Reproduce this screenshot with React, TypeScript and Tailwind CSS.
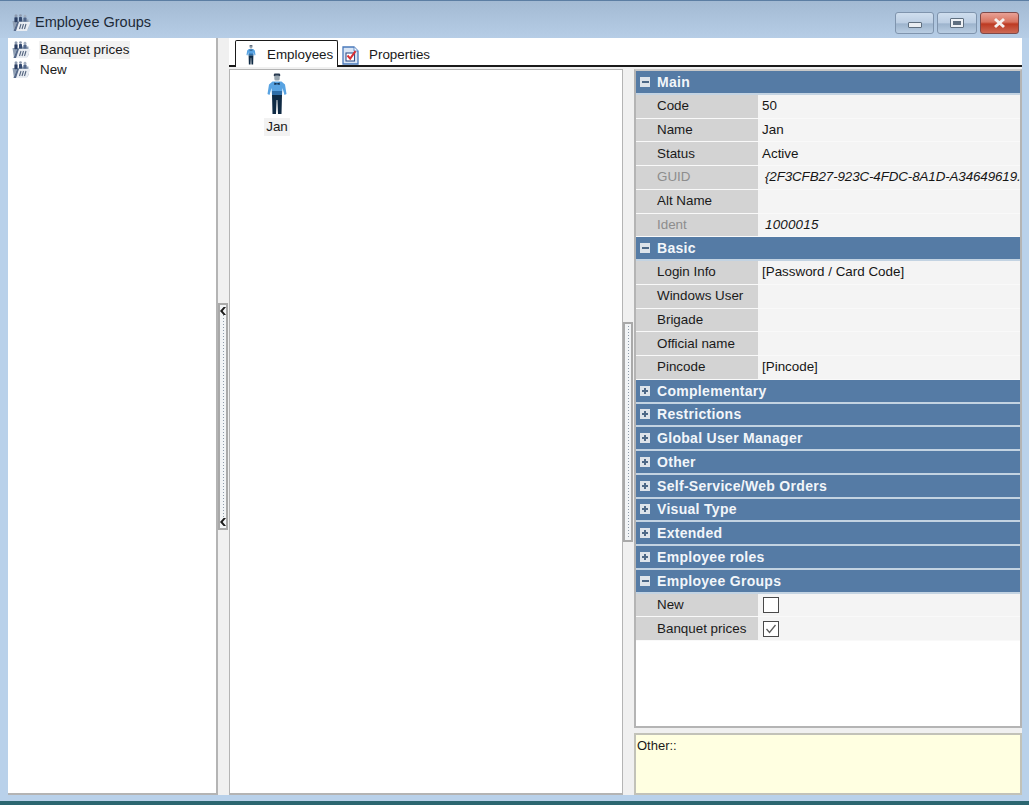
import React from "react";

const FONT = "font-['Liberation_Sans',Arial,sans-serif]";

function GroupIcon() {
  return (
    <svg width="20" height="18" viewBox="0 0 20 18" className="shrink-0">
      <path d="M1.5 7h6l1-1.5h9V14l-2 3H3z" fill="#8f9fb4" />
      <circle cx="5" cy="1.8" r="1.5" fill="#8d9aae" />
      <rect x="3.4" y="3.2" width="3.2" height="5" rx="0.6" fill="#2c3f63" />
      <circle cx="9.5" cy="1.6" r="1.4" fill="#8d9aae" />
      <rect x="8" y="3" width="3" height="4.5" rx="0.6" fill="#344a70" />
      <circle cx="14" cy="2.2" r="1.4" fill="#a2aebf" />
      <rect x="12.5" y="3.6" width="3" height="4" rx="0.6" fill="#52678a" />
      <path d="M6 8h13.5l-3.5 9H2.5z" fill="#e9edf3" />
      <path d="M6 8h2L5 17H2.5z" fill="#55698a" />
      <path d="M10 10l-1.5 5M12.5 10L11 15M15 10l-1.5 5" stroke="#54657f" strokeWidth="1.1" />
    </svg>
  );
}

function PersonIcon({ w = 20, h = 42 }: { w?: number; h?: number }) {
  return (
    <svg width={w} height={h} viewBox="0 0 20 42" className="shrink-0">
      <rect x="6.8" y="0.5" width="6.4" height="3" rx="1.2" fill="#2b3c52" />
      <rect x="7.3" y="2.5" width="5.4" height="5" rx="1.5" fill="#98a6b0" />
      <path d="M5.5 8.5 L14.5 8.5 L18 11.5 L19.5 21 L17.5 22 L15.5 15 L15 22 L5 22 L4.5 15 L2.5 22 L0.5 21 L2 11.5 Z" fill="#58a3e2" />
      <path d="M7.3 9.5 L10 10.5 L12.7 9.5 L12.7 12 L10 11.2 L7.3 12 Z" fill="#12304f" />
      <path d="M5 18 L15 18 L15 22 L5 22 Z" fill="#2f6ea8" />
      <path d="M5 22 L15 22 L14.5 41 L11 41 L10.4 27 L9.6 27 L9 41 L5.5 41 Z" fill="#0f2a44" />
    </svg>
  );
}

function PropertiesIcon() {
  return (
    <svg width="17" height="19" viewBox="0 0 17 19" className="shrink-0">
      <path d="M1 1h11l4 4v13H1z" fill="#d9e5f5" stroke="#4a79bb" strokeWidth="1.3" />
      <path d="M12 1v4h4" fill="#f4f7fb" stroke="#4a79bb" strokeWidth="0.8" />
      <rect x="4" y="7" width="8.5" height="8" fill="#fff" stroke="#34528a" strokeWidth="1.1" />
      <path d="M5.5 9.5l2.7 3.2 5.3-7.5" fill="none" stroke="#d92f35" strokeWidth="2" />
    </svg>
  );
}

function Minus() {
  return (
    <span className="flex h-[10px] w-[10px] shrink-0 items-center justify-center bg-[#dde3ea]">
      <span className="h-[2px] w-[7px] bg-[#4d6887]" />
    </span>
  );
}

function Plus() {
  return (
    <span className="relative flex h-[10px] w-[10px] shrink-0 items-center justify-center bg-[#dde3ea]">
      <span className="h-[2px] w-[6px] bg-[#4d6887]" />
      <span className="absolute left-[4px] top-[2px] h-[6px] w-[2px] bg-[#4d6887]" />
    </span>
  );
}

function Section({ label, open }: { label: string; open?: boolean }) {
  return (
    <div className="flex h-[23.76px] items-center gap-[7px] border-b-[2px] border-b-[#c3d3e2] bg-[#557ba5] pl-[4px]">
      {open ? <Minus /> : <Plus />}
      <span className="text-[14px] font-bold leading-none tracking-[0.3px] text-[#f2f6fa]">{label}</span>
    </div>
  );
}

function Row({
  label,
  children,
  dim,
}: {
  label: string;
  children?: React.ReactNode;
  dim?: boolean;
}) {
  return (
    <div className="flex h-[23.76px] items-stretch border-b border-b-[#f9f9f9] bg-[#f4f4f4]">
      <div
        className={`flex w-[122px] shrink-0 items-center bg-[#d3d3d3] pl-[21px] text-[13.4px] ${dim ? "text-[#8d8d8d]" : "text-[#1a1a1a]"}`}
      >
        {label}
      </div>
      <div className="flex min-w-0 flex-1 items-center overflow-hidden whitespace-nowrap pl-[4px] text-[13.4px] text-[#161616]">
        {children}
      </div>
    </div>
  );
}

function Check({ checked }: { checked?: boolean }) {
  return (
    <span className="ml-[1px] flex h-[16px] w-[16px] items-center justify-center border border-[#4a4a4a] bg-white">
      {checked && (
        <svg width="12" height="12" viewBox="0 0 12 12">
          <path d="M1.5 6l3 3.5L10.5 2" fill="none" stroke="#5c5c5c" strokeWidth="1.3" />
        </svg>
      )}
    </span>
  );
}

function Splitter({ top, height, arrows }: { top: number; height: number; arrows: boolean }) {
  return (
    <div className="relative w-[11px] shrink-0 bg-[#f0f0f0]">
      <div
        className="absolute left-0 flex w-[10px] flex-col items-center justify-between border-2 border-[#a9a9a9] bg-[#f2f4f6] py-[2px]"
        style={{ top, height }}
      >
        {arrows && <span className="block h-[8px] w-[6px] bg-[#1b1b1b] [clip-path:polygon(100%_0,45%_50%,100%_100%,60%_100%,0_50%,60%_0)]" />}
        <span className="w-px flex-1 [background-image:linear-gradient(#8d9aa8_50%,transparent_50%)] [background-size:1px_3px]" />
        {arrows && <span className="block h-[8px] w-[6px] bg-[#1b1b1b] [clip-path:polygon(100%_0,45%_50%,100%_100%,60%_100%,0_50%,60%_0)]" />}
      </div>
    </div>
  );
}

function WinButton({ kind }: { kind: "min" | "max" | "close" }) {
  if (kind === "close") {
    return (
      <div className="flex h-[22px] w-[39px] items-center justify-center rounded-[3px] border border-[#7d4a4a] bg-[linear-gradient(#e8a196_0%,#d7735f_45%,#bd3a22_55%,#cd6a55_100%)]">
        <svg width="15" height="12" viewBox="0 0 15 12">
          <path d="M3 2l9 8M12 2l-9 8" stroke="#f5f0ee" strokeWidth="3" />
        </svg>
      </div>
    );
  }
  return (
    <div className={`flex h-[22px] items-center justify-center rounded-[3px] border border-[#7f94ad] bg-[linear-gradient(#cfdeee_0%,#bccee3_48%,#9db4cd_55%,#b9cde2_100%)] ${kind === "min" ? "w-[39px]" : "w-[40px]"}`}>
      {kind === "min" ? (
        <span className="mt-[5px] h-[6px] w-[14px] rounded-[1px] border border-[#5f6f80] bg-[#e9edf2]" />
      ) : (
        <span className="flex h-[10px] w-[14px] items-center justify-center rounded-[1px] border border-[#5f6f80] bg-[#eef1f5]">
          <span className="h-[4px] w-[8px] bg-[#5f6f80]" />
        </span>
      )}
    </div>
  );
}

export default function App() {
  return (
    <div className={`${FONT} flex h-[805px] w-[1029px] flex-col overflow-hidden bg-[#b9d1ea] text-[14px]`}>
      {/* title bar */}
      <div className="flex h-[38px] shrink-0 items-center justify-between border-t border-t-[#5c7ea3] bg-[linear-gradient(#a3bad3,#b6cde6)] pl-[11px] pr-[10px] pt-[7px]">
        <div className="flex items-center gap-[4px]">
          <GroupIcon />
          <span className="text-[14.5px] text-[#1d2a38]">Employee Groups</span>
        </div>
        <div className="-mt-[1px] flex gap-[3px]">
          <WinButton kind="min" />
          <WinButton kind="max" />
          <WinButton kind="close" />
        </div>
      </div>

      {/* body */}
      <div className="flex min-h-0 flex-1 pl-[8px] pr-[7px]">
        {/* tree */}
        <div className="w-[210px] shrink-0 border-b-2 border-r-2 border-[#b4b4b4] bg-white pt-[2px]">
          <div className="flex h-[20px] items-center pl-[3px]">
            <GroupIcon />
            <span className="ml-[8px] bg-[#f2f2f2] px-[1px] text-[13.4px] leading-[18px] text-[#1a1a1a]">Banquet prices</span>
          </div>
          <div className="flex h-[20px] items-center pl-[3px]">
            <GroupIcon />
            <span className="ml-[8px] px-[1px] text-[13.4px] leading-[18px] text-[#1a1a1a]">New</span>
          </div>
        </div>

        <Splitter top={265} height={227} arrows />

        {/* right side */}
        <div className="flex min-w-0 flex-1 flex-col">
          {/* tabs */}
          <div className="relative flex h-[29px] shrink-0 items-end border-b-2 border-b-[#1a1a1a] bg-white">
            <div className="relative z-10 -mb-[2px] ml-[6px] flex h-[27px] w-[103px] items-center rounded-t-[2px] border border-b-0 border-[#1a1a1a] bg-white pl-[9px] pt-[2px]">
              <PersonIcon w={12} h={20} />
              <span className="ml-[10px] text-[13.4px] text-[#1a1a1a]">Employees</span>
            </div>
            <div className="flex h-[27px] items-center pl-[4px] pt-[7px]">
              <PropertiesIcon />
              <span className="ml-[10px] text-[13.4px] text-[#1a1a1a]">Properties</span>
            </div>
          </div>

          <div className="flex min-h-0 flex-1 bg-[#f0f0f0] pt-[2px]">
            {/* employees */}
            <div className="w-[394px] shrink-0 border-x border-b-2 border-t border-[#b4b4b4] bg-white">
              <div className="ml-[32px] mt-[3px] flex w-[30px] flex-col items-center">
                <PersonIcon />
                <span className="mt-[3px] bg-[#f2f2f2] px-[2px] text-[13.4px] leading-[18px] text-[#1a1a1a]">Jan</span>
              </div>
            </div>

            <Splitter top={253} height={220} arrows={false} />

            {/* props */}
            <div className="flex min-w-0 flex-1 flex-col gap-[5px]">
              <div className="flex h-[659px] shrink-0 flex-col border-2 border-[#b4b4b4] border-t-[#c8c8c8] bg-white">
                <Section label="Main" open />
                <Row label="Code">50</Row>
                <Row label="Name">Jan</Row>
                <Row label="Status">Active</Row>
                <Row label="GUID" dim>
                  <span className="pl-[3px] italic tracking-[-0.12px]">{"{2F3CFB27-923C-4FDC-8A1D-A34649619."}</span>
                </Row>
                <Row label="Alt Name" />
                <Row label="Ident" dim>
                  <span className="pl-[3px] italic tracking-[0.2px]">1000015</span>
                </Row>
                <Section label="Basic" open />
                <Row label="Login Info">[Password / Card Code]</Row>
                <Row label="Windows User" />
                <Row label="Brigade" />
                <Row label="Official name" />
                <Row label="Pincode">[Pincode]</Row>
                <Section label="Complementary" />
                <Section label="Restrictions" />
                <Section label="Global User Manager" />
                <Section label="Other" />
                <Section label="Self-Service/Web Orders" />
                <Section label="Visual Type" />
                <Section label="Extended" />
                <Section label="Employee roles" />
                <Section label="Employee Groups" open />
                <Row label="New">
                  <Check />
                </Row>
                <Row label="Banquet prices">
                  <Check checked />
                </Row>
              </div>
              <div className="flex-1 border-2 border-[#c2c2b8] bg-[#ffffe1] pl-[1px] pt-[2px] text-[13px] leading-[18px] text-[#1a1a1a]">
                Other::
              </div>
            </div>
          </div>
        </div>
      </div>

      <div className="h-[6px] shrink-0 bg-[#b9d1ea]" />
      <div className="h-[4px] shrink-0 bg-[#2b6670]" />
    </div>
  );
}
